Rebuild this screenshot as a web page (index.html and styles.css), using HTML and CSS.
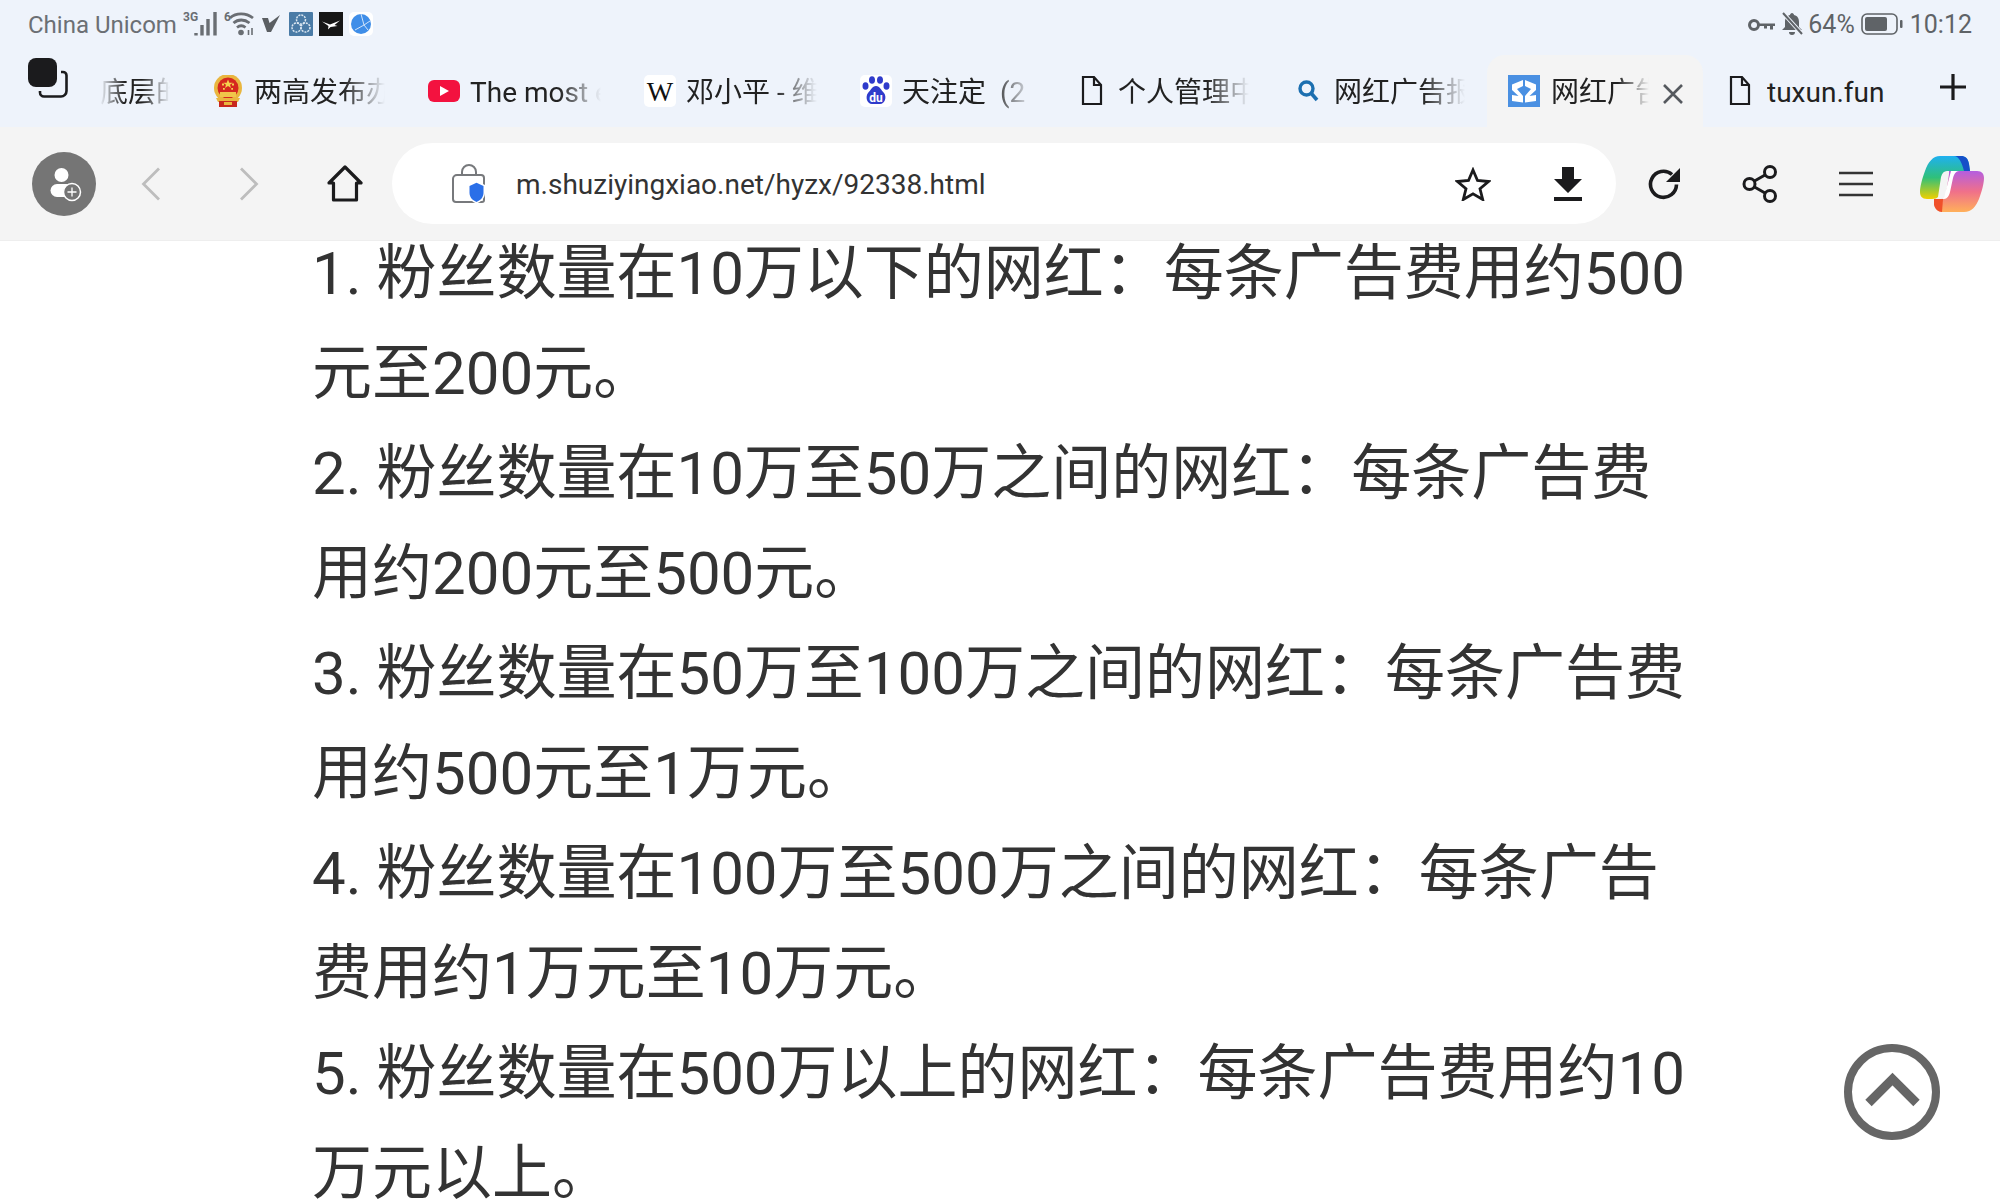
FILE: index.html
```html
<!DOCTYPE html>
<html lang="zh-CN">
<head>
<meta charset="utf-8">
<title>网红广告报价</title>
<link rel="stylesheet" href="styles.css">
</head>
<body>

<div class="top">
	<div class="status">
		<div class="status-left">
			<span class="carrier">China Unicom</span>
			<svg class="s-signal" width="35" height="24" viewBox="0 0 35 24"><text x="0" y="9" class="tiny">3G</text><path d="M13 21v2.500M19 13v10.500M25 7v16.500M32 0v23.500" stroke="#6a6e73" stroke-width="3.400" fill="none"/></svg>
			<svg class="s-wifi" width="30" height="24" viewBox="0 0 30 24"><text x="0" y="9" class="tiny">6</text><path d="M6 6c6-5.500 16-5.500 23 0M9.500 11c4.500-4 11-4 16 0M13 15.500c2.500-2 6-2 8.500 0" stroke="#6a6e73" stroke-width="2.800" fill="none"/><circle cx="17" cy="20.500" r="2.800" fill="#6a6e73"/><path d="M24.500 18v5M28 16v7" stroke="#6a6e73" stroke-width="1.600"/></svg>
			<svg class="s-v" width="18" height="18" viewBox="0 0 18 18"><path d="M0 3h6l1.500 5L18 0 9 17H5z" fill="#5a5e62"/></svg>
			<svg class="s-app" width="24" height="24" viewBox="0 0 24 24"><rect width="24" height="24" rx="1" fill="#4a7ba6"/><g fill="none" stroke="#dce8f2" stroke-width="1.500" stroke-dasharray="2 1"><circle cx="12" cy="7.500" r="4.500"/><circle cx="7.500" cy="15.500" r="4.500"/><circle cx="16.500" cy="15.500" r="4.500"/></g></svg>
			<svg class="s-app" width="24" height="24" viewBox="0 0 24 24"><rect width="24" height="24" fill="#161616"/><path d="M3 9.500l8 3 10-4-5.500 4.500 3 1-7 1-2.500 2.500.5-3.500z" fill="#fff"/></svg>
			<svg class="s-app" width="24" height="24" viewBox="0 0 24 24"><rect width="24" height="24" rx="5" fill="#fff"/><circle cx="12" cy="12" r="10" fill="#3f8ee8"/><path d="M12 2l3 11-9 5M15 13l4 5M15 13l6-4" stroke="#cfe3fa" stroke-width="1" fill="none"/></svg>
		</div>
		<div class="status-right">
			<svg width="28" height="16" viewBox="0 0 28 16"><circle cx="7" cy="8" r="4.500" fill="none" stroke="#5f6367" stroke-width="3"/><path d="M12 6.500h16v2.500h-2v3.500h-3V9h-3v2.500h-3V9h-5z" fill="#5f6367"/></svg>
			<svg class="bell" width="22" height="24" viewBox="0 0 22 24"><path d="M11 1c1 0 2 1 2 2 4 1 5 4 5 7v5l3 3H1l3-3v-5c0-3 1-6 5-7 0-1 1-2 2-2zM8 20h6c0 2-1 3-3 3s-3-1-3-3z" fill="#5f6367"/><path d="M2 1l19 21" stroke="#eef3fb" stroke-width="4"/><path d="M2 1l19 21" stroke="#5f6367" stroke-width="2"/></svg>
			<span class="pct">64%</span>
			<svg class="batt" width="42" height="24" viewBox="0 0 42 24"><rect x="1" y="2" width="35" height="20" rx="5" fill="none" stroke="#5f6367" stroke-width="1.600"/><rect x="4" y="5" width="22" height="14" rx="2" fill="#5f6367"/><rect x="39" y="8" width="2.500" height="8" rx="1" fill="#5f6367"/></svg>
			<span class="clock">10:12</span>
		</div>
	</div>

	<div class="tabbar">
		<div class="switcher">
			<svg width="40" height="40" viewBox="0 0 40 40"><path d="M33 14h2a3.500 3.500 0 0 1 3.500 3.500V33a5.500 5.500 0 0 1-5.500 5.500H16a4 4 0 0 1-4-4V33" fill="none" stroke="#1b1b1d" stroke-width="2.600"/><rect x="0" y="0" width="29" height="29" rx="8" fill="#1b1b1d"/></svg>
		</div>
		<div class="tab tab-first"><span class="tab-text">底层的</span></div>
		<div class="tab">
			<svg class="fav" width="32" height="32" viewBox="0 0 32 32">
				<circle cx="16" cy="13" r="14" fill="#e9b63f"/>
				<circle cx="16" cy="13" r="10.500" fill="#d5281f"/>
				<path d="M16 4.500l1.300 3.200h3.400l-2.700 2 1 3.300-3-2-3 2 1-3.300-2.700-2h3.400z" fill="#f5d14e"/>
				<path d="M10 8.500h2v2h-2zM20 8.500h2v2h-2zM11 13h1.800v1.800H11zM19.200 13H21v1.800h-1.800z" fill="#f5d14e"/>
				<path d="M8 17h16v5H8z" fill="#f0c54a"/>
				<path d="M4 23h24l-2 4H6z" fill="#e9b63f"/>
				<path d="M7 26h18v6H7z" fill="#c8281e"/>
				<path d="M12 27h8v3h-8z" fill="#e9b63f"/>
			</svg>
			<span class="tab-text">两高发布办</span>
		</div>
		<div class="tab">
			<svg class="fav" width="32" height="32" viewBox="0 0 32 32"><rect y="5" width="32" height="22" rx="6" fill="#f3123f"/><path d="M12 11l9 5-9 5z" fill="#fff"/></svg>
			<span class="tab-text">The most e</span>
		</div>
		<div class="tab">
			<svg class="fav" width="32" height="32" viewBox="0 0 32 32"><rect width="32" height="32" rx="5" fill="#fff"/><text x="16" y="26" class="wiki">W</text></svg>
			<span class="tab-text">邓小平 - 维</span>
		</div>
		<div class="tab">
			<svg class="fav" width="32" height="32" viewBox="0 0 32 32"><rect width="32" height="32" rx="5" fill="#fff"/><g fill="#2f3bcb"><ellipse cx="5.500" cy="11" rx="3" ry="3.800"/><ellipse cx="12" cy="5" rx="3" ry="3.800"/><ellipse cx="20" cy="5" rx="3" ry="3.800"/><ellipse cx="26.500" cy="11" rx="3" ry="3.800"/><path d="M16 11c4 0 5 4 8 7 3 4 1 11-4 11h-8c-5 0-7-7-4-11 3-3 4-7 8-7z"/></g><text x="16" y="27" class="du">du</text></svg>
			<span class="tab-text">天注定&nbsp;&nbsp;(2</span>
		</div>
		<div class="tab">
			<svg class="fav" width="32" height="32" viewBox="0 0 32 32"><path d="M7 2h11l7 8v19H7zM18 2v8h7" fill="none" stroke="#1b1b1d" stroke-width="2.200"/></svg>
			<span class="tab-text">个人管理中</span>
		</div>
		<div class="tab">
			<svg class="fav" width="32" height="32" viewBox="0 0 32 32"><circle cx="14.500" cy="13.500" r="6.500" fill="none" stroke="#1c6fb0" stroke-width="3.400"/><path d="M19 18l6 7" stroke="#1c6fb0" stroke-width="3.600"/></svg>
			<span class="tab-text">网红广告报</span>
		</div>
		<div class="tab tab-active">
			<svg class="fav" width="32" height="32" viewBox="0 0 32 32"><rect width="32" height="32" fill="#4a90e2"/><path d="M15 5L4 9.500V15l6.500 6L4 20v6l11 1.500V21L9 14l6-3zM17 5l11 4.500V15l-6.500 6 6.500-1v6l-11 1.500V21l6-7-6-3z" fill="#fff"/></svg>
			<span class="tab-text tab-text-short">网红广告</span>
			<svg class="tab-close" width="22" height="22" viewBox="0 0 22 22"><path d="M2 2l18 18M20 2L2 20" stroke="#55595e" stroke-width="2.600"/></svg>
		</div>
		<div class="tab">
			<svg class="fav" width="32" height="32" viewBox="0 0 32 32"><path d="M7 2h11l7 8v19H7zM18 2v8h7" fill="none" stroke="#1b1b1d" stroke-width="2.200"/></svg>
			<span class="tab-text tab-text-plain">tuxun.fun</span>
		</div>
		<div class="plus">
			<svg width="28" height="28" viewBox="0 0 28 28"><path d="M14 1v26M1 14h26" stroke="#1b1b1d" stroke-width="3.200"/></svg>
		</div>
	</div>

	<div class="toolbar">
		<div class="avatar">
			<svg width="64" height="64" viewBox="0 0 64 64"><circle cx="32" cy="32" r="32" fill="#757575"/><circle cx="29.500" cy="23" r="7" fill="#fff"/><rect x="18.500" y="32" width="24" height="13" rx="6.500" fill="#fff"/><circle cx="40" cy="40" r="8.500" fill="#757575" stroke="#fff" stroke-width="1.500"/><path d="M40 35.500v9M35.500 40h9" stroke="#fff" stroke-width="1.300"/></svg>
		</div>
		<div class="slot slot-back"><svg width="20" height="34" viewBox="0 0 20 34"><path d="M18 1.500L2.500 17 18 32.500" fill="none" stroke="#bdbdbd" stroke-width="2.800"/></svg></div>
		<div class="slot slot-back"><svg width="20" height="34" viewBox="0 0 20 34"><path d="M2 1.500L17.500 17 2 32.500" fill="none" stroke="#bdbdbd" stroke-width="2.800"/></svg></div>
		<div class="slot slot-home"><svg width="36" height="37" viewBox="0 0 36 37"><path d="M2 18L18 2l16 16h-4.500v17h-23V18z" fill="none" stroke="#1b1b1d" stroke-width="3.200" stroke-linejoin="round"/></svg></div>
		<div class="address">
			<svg class="lock" width="36" height="40" viewBox="0 0 36 40"><path d="M11 11V8a7 7 0 0 1 14 0v3" fill="none" stroke="#77797c" stroke-width="2"/><path d="M6 11h24a3 3 0 0 1 3 3v22a2 2 0 0 1-2 2H5a3 3 0 0 1-3-3V15a4 4 0 0 1 4-4z" fill="none" stroke="#77797c" stroke-width="2"/><path d="M17 21l8.500-4 8.500 4v8c0 5-4 9-8.500 10.500C21 38 17 34 17 29z" fill="#fff"/><path d="M18.500 22l7-3.300 7 3.300v7c0 4.500-3.500 7.500-7 9-3.500-1.500-7-4.500-7-9z" fill="#2a6fe8"/></svg>
			<span class="url">m.shuziyingxiao.net/hyzx/92338.html</span>
			<svg class="star" width="36" height="34" viewBox="0 0 36 34"><path d="M18 3l4.500 10.500 11 1-8.500 7.300 2.700 10.700L18 26.800 8.300 32.500 11 21.800 2.500 14.500l11-1z" fill="none" stroke="#1b1b1d" stroke-width="2.800"/></svg>
			<svg class="down" width="28" height="34" viewBox="0 0 28 34"><path d="M8 0h12v12h8L14 26 0 12h8zM0 30h28v4H0z" fill="#1b1b1d"/></svg>
		</div>
		<div class="slot"><svg width="34" height="34" viewBox="0 0 34 34"><path d="M29.500 17.500A13 13 0 1 1 25 7.500" fill="none" stroke="#1b1b1d" stroke-width="3.600"/><path d="M33 1v14H19z" fill="#1b1b1d"/></svg></div>
		<div class="slot"><svg width="36" height="38" viewBox="0 0 36 38"><g fill="none" stroke="#1b1b1d" stroke-width="3"><circle cx="28" cy="7" r="5.500"/><circle cx="7.500" cy="19" r="5.500"/><circle cx="28" cy="31" r="5.500"/><path d="M23 10l-10.500 6M12.500 22L23 28"/></g></svg></div>
		<div class="slot"><svg width="34" height="26" viewBox="0 0 34 26"><path d="M0 2h34M0 13h34M0 24h34" stroke="#333" stroke-width="2.400"/></svg></div>
		<div class="slot">
			<svg width="64" height="56" viewBox="0 0 64 56">
				<defs>
					<linearGradient id="cpa" x1="0" y1="0" x2="0" y2="1"><stop offset="0" stop-color="#1fb0f0"/><stop offset=".5" stop-color="#2fc07a"/><stop offset="1" stop-color="#f0d000"/></linearGradient>
					<linearGradient id="cpb" x1="0" y1="0" x2="0" y2="1"><stop offset="0" stop-color="#b45ee0"/><stop offset=".5" stop-color="#f0708a"/><stop offset="1" stop-color="#ffb05a"/></linearGradient>
				</defs>
				<path d="M20 0h21c4 0 7 2 8 8l1 7H27c-3 0-5 2-6 6l-3 20c-1 1-3 2-6 2H7c-5 0-7-3-7-7 0-5 2-13 5-21C8 6 13 0 20 0z" fill="url(#cpa)"/>
				<path d="M34 0h7c4 0 7 2 8 8l1 7h-6c-2-8-5-15-10-15z" fill="#1650c8"/>
				<path d="M29 15h28c5 0 7 3 7 7 0 5-2 13-5 21-3 7-7 13-15 13H23c-4 0-7-2-8-7l-1-6h7c3 0 4-2 5-5l3-20z" fill="url(#cpb)"/>
				<path d="M14 43h9l-1 13c-4 0-7-3-8-7z" fill="#f0502a"/>
				<path d="M31 15h8c-3 0-5 3-6 7l-3 14c-1 4-3 7-6 7h-3c2 0 4-2 4-5z" fill="#fff"/>
			</svg>
		</div>
	</div>
</div>

<div class="article">
	<p>1. 粉丝数量在10万以下的网红：每条广告费用约500元至200元。</p>
	<p>2. 粉丝数量在10万至50万之间的网红：每条广告费用约200元至500元。</p>
	<p>3. 粉丝数量在50万至100万之间的网红：每条广告费用约500元至1万元。</p>
	<p>4. 粉丝数量在100万至500万之间的网红：每条广告费用约1万元至10万元。</p>
	<p>5. 粉丝数量在500万以上的网红：每条广告费用约10万元以上。</p>
</div>

<div class="totop">
	<svg width="96" height="98" viewBox="0 0 96 98"><circle cx="48" cy="49" r="44" fill="#fff" stroke="#666" stroke-width="8"/><path d="M24.500 60L48.500 36l24 24" fill="none" stroke="#666" stroke-width="9"/></svg>
</div>

</body>
</html>
```

FILE: styles.css
```css
html, body {
	margin: 0;
	height: 1200px;
	overflow: hidden;
	background: #fff;
}

body {
	font-family: Roboto, "Noto Sans CJK SC", sans-serif;
	color: #333;
}

svg {
	display: block;
	flex: none;
}

.top {
	position: relative;
	z-index: 2;
	background: #eef3fb;
}

/* status bar */
.status {
	height: 55px;
	display: flex;
	justify-content: space-between;
	padding: 0 28px;
	box-sizing: border-box;
	font-size: 24px;
	color: #6b6f74;
}

.status-left, .status-right {
	display: flex;
	align-items: flex-start;
	padding-top: 12px;
}

.carrier {
	line-height: 26px;
}

.s-signal {
	margin-left: 6px;
}

.s-wifi {
	margin-left: 6px;
}

.s-v {
	margin: 3px 0 0 8px;
}

.s-app {
	margin-left: 6px;
}

.s-app:nth-of-type(4) {
	margin-left: 9px;
}

.tiny {
	font-size: 12px;
	font-weight: 700;
	fill: #6a6e73;
}

.status-right {
	color: #5f6367;
	font-size: 25px;
}

.status-right svg:first-child {
	margin: 5px 0 0 0;
}

.bell {
	margin-left: 6px;
}

.pct {
	margin-left: 5px;
	line-height: 26px;
}

.batt {
	margin-left: 6px;
}

.clock {
	margin-left: 7px;
	line-height: 26px;
}

/* tabs */
.tabbar {
	height: 72px;
	display: flex;
	align-items: stretch;
}

.switcher {
	width: 100px;
	flex: none;
	padding: 3px 0 0 28px;
	box-sizing: border-box;
}

.tab {
	width: 216px;
	flex: none;
	display: flex;
	align-items: flex-start;
	padding: 20px 0 0 21px;
	box-sizing: border-box;
	border-radius: 18px 18px 0 0;
}

.tab-first {
	width: 91px;
	padding-left: 0;
}

.tab-first .tab-text {
	width: 70px;
	-webkit-mask-image: linear-gradient(to right, transparent, #000 35%, #000 60%, transparent);
	mask-image: linear-gradient(to right, transparent, #000 35%, #000 60%, transparent);
}

.tab-active {
	background: #f4f4f4;
}

.fav {
	margin-right: 10px;
}

.tab-text {
	width: 131px;
	margin-top: 1px;
	overflow: hidden;
	white-space: nowrap;
	font-size: 28px;
	line-height: 34px;
	color: #222;
	-webkit-mask-image: linear-gradient(to right, #000 68%, transparent);
	mask-image: linear-gradient(to right, #000 68%, transparent);
}

.tab-active .fav {
	margin-right: 11px;
}

.tab-text-short {
	width: 98px;
}

.tab-text-plain {
	width: 130px;
	margin-left: 1px;
	-webkit-mask-image: none;
	mask-image: none;
}

.tab-close {
	margin: 8px 0 0 13px;
}

.plus {
	flex: 1;
	padding: 18px 0 0 20px;
}

/* toolbar */
.toolbar {
	height: 114px;
	display: flex;
	align-items: center;
	background: #f4f4f4;
	border-bottom: 1px solid #eee;
	box-sizing: border-box;
}

.avatar {
	width: 102px;
	flex: none;
	padding-left: 32px;
	box-sizing: border-box;
}

.slot {
	width: 96px;
	flex: none;
	display: flex;
	justify-content: center;
}

.slot-back {
	width: 98px;
}

.slot-home {
	width: 94px;
}

.address {
	flex: 1;
	height: 81px;
	display: flex;
	align-items: center;
	background: #fff;
	border-radius: 41px;
	padding-left: 59px;
}

.url {
	flex: 1;
	margin: 2px 0 0 29px;
	font-size: 28px;
	color: #333;
}

.star {
	margin-right: 63px;
}

.down {
	margin-right: 34px;
}

/* article */
.article {
	width: 1380px;
	margin: -17px 0 0 312px;
	font-size: 60px;
	line-height: 100px;
}

.article p {
	margin: 0;
}

.totop {
	position: absolute;
	left: 1844px;
	top: 1043px;
}

.wiki {
	font-family: "Liberation Serif", serif;
	font-size: 28px;
	text-anchor: middle;
	fill: #111;
}

.du {
	font-family: Roboto, sans-serif;
	font-size: 12px;
	font-weight: 700;
	text-anchor: middle;
	fill: #fff;
}
```
